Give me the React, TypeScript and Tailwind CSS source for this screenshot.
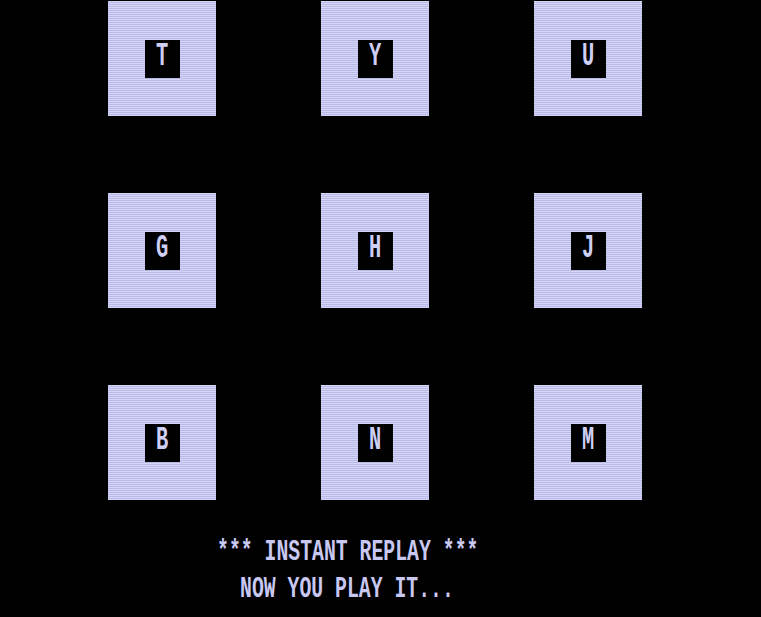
import React from "react";

const rows = [
  ["T", "Y", "U"],
  ["G", "H", "J"],
  ["B", "N", "M"],
];

function Key({ ch }: { ch: string }) {
  return (
    <div className="flex h-[115px] w-[108px] items-center justify-center bg-[repeating-linear-gradient(to_bottom,#d6d6fa_0px,#d6d6fa_1px,#b9b9e6_1px,#b9b9e6_2px)]">
      <div className="flex h-[38px] w-[35px] items-start justify-center bg-black">
        <span
          className="inline-block origin-top scale-x-[0.6] text-[34px] font-bold leading-[32px] text-[#cfcff6]"
          style={{ fontFamily: '"Liberation Mono", monospace' }}
        >
          {ch}
        </span>
      </div>
    </div>
  );
}

export default function App() {
  return (
    <div className="h-[617px] w-[761px] overflow-hidden bg-black pt-[1px]">
      <div className="grid w-fit grid-cols-[108px_108px_108px] gap-x-[105px] gap-y-[77px] pl-[108px]">
        {rows.flat().map((c) => (
          <Key key={c} ch={c} />
        ))}
      </div>
      <div
        className="mt-[34px] flex flex-col text-[30px] font-bold leading-[37px] text-[#c8c8f2]"
        style={{ fontFamily: '"Liberation Mono", monospace' }}
      >
        <span className="ml-[217px] inline-block w-max origin-left scale-x-[0.66] whitespace-pre">
          *** INSTANT REPLAY ***
        </span>
        <span className="ml-[240px] inline-block w-max origin-left scale-x-[0.66] whitespace-pre">
          NOW YOU PLAY IT...
        </span>
      </div>
    </div>
  );
}
